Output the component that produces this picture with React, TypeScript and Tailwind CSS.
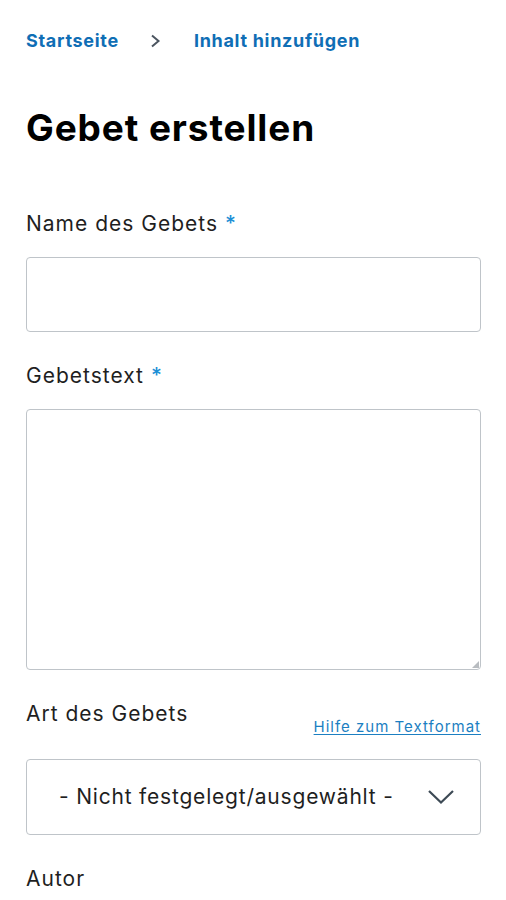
import React from "react";

function Required() {
  return <span className="ml-[7px] font-medium text-[#1c8fd6]">*</span>;
}

export default function App() {
  return (
    <div
      className="min-h-[900px] w-[506px] bg-white pl-[26px] pr-[25px] text-[#1f1f1f]"
      style={{ fontFamily: "Inter, 'Noto Sans', sans-serif" }}
    >
      <nav className="flex items-center pt-[29px] text-[18px] font-bold leading-[24px] tracking-[0.7px] text-[#0f6eb5]">
        <a>Startseite</a>
        <span className="ml-[31px] mr-[33px] text-[#4b5560]">
          <svg width="11" height="14" viewBox="0 0 11 14" fill="none">
            <path d="M2 1.5 L8.5 7 L2 12.5" stroke="currentColor" strokeWidth="2" />
          </svg>
        </span>
        <a>Inhalt hinzufügen</a>
      </nav>

      <h1 className="mt-[53px] text-[37px] font-bold leading-[44px] tracking-[0.9px] text-black">
        Gebet erstellen
      </h1>

      <div className="mt-[61px]">
        <label className="block text-[21px] leading-[26px] tracking-[1px]">
          Name des Gebets
          <Required />
        </label>
        <div className="mt-[20px] h-[75px] rounded-[4px] border border-[#bfc4c9]" />
      </div>

      <div className="mt-[31px]">
        <label className="block text-[21px] leading-[26px] tracking-[1px]">
          Gebetstext
          <Required />
        </label>
        <div className="relative mt-[20px] h-[261px] rounded-[4px] border border-[#bfc4c9]">
          <svg
            className="absolute bottom-[1px] right-[1px]"
            width="7"
            height="7"
            viewBox="0 0 7 7"
          >
            <path d="M7 0 L7 7 L0 7 Z" fill="#b8bcc0" />
          </svg>
        </div>
      </div>

      <div className="mt-[31px] flex items-start justify-between">
        <label className="block text-[21px] leading-[26px] tracking-[1px]">Art des Gebets</label>
        <a className="mt-[16px] text-[15px] leading-[20px] tracking-[1px] text-[#1c7fc2] underline underline-offset-2">
          Hilfe zum Textformat
        </a>
      </div>

      <div className="mt-[22px] flex h-[76px] items-center rounded-[4px] border border-[#bfc4c9] pl-[32px] pr-[25px]">
        <span className="flex-1 text-[21px] leading-[28px] tracking-[0.8px] text-[#1f1f1f]">
          - Nicht festgelegt/ausgewählt -
        </span>
        <svg width="28" height="16" viewBox="0 0 28 16" fill="none">
          <path d="M2 2 L14 13.5 L26 2" stroke="#3d4a55" strokeWidth="2.2" />
        </svg>
      </div>

      <div className="mt-[31px] text-[21px] leading-[26px] tracking-[1px]">Autor</div>
    </div>
  );
}
